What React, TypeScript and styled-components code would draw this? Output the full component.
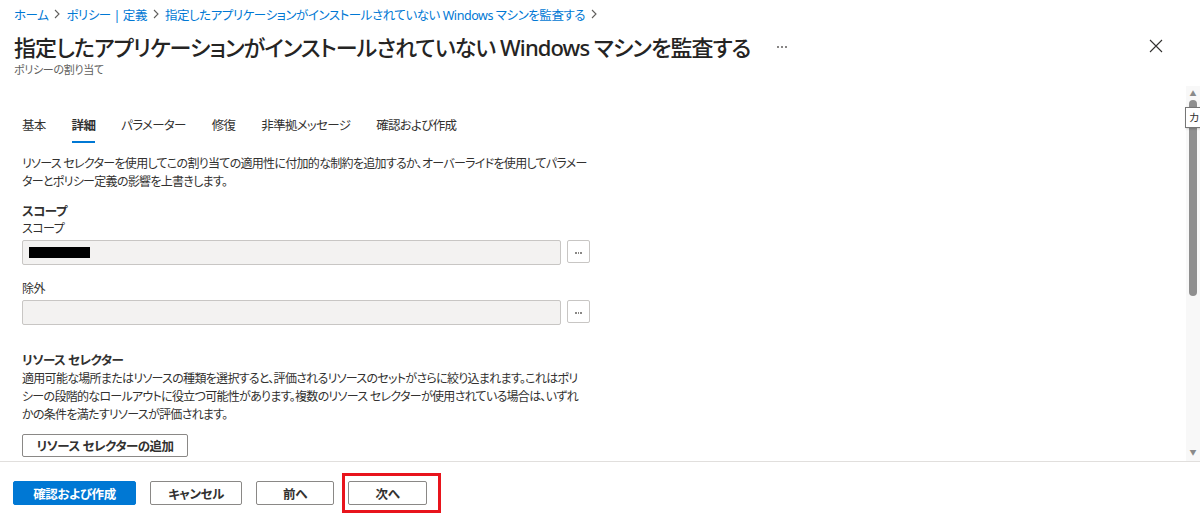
import styled, { createGlobalStyle } from "styled-components";

const GlobalStyle = createGlobalStyle`
  html, body { margin: 0; padding: 0; background: #fff; }
  body {
    font-family: "Noto Sans", "Noto Sans CJK JP", sans-serif;
    font-feature-settings: "palt";
    color: #323130;
  }
  * { box-sizing: border-box; }
`;

const crumbs = ["ホーム", "ポリシー | 定義", "指定したアプリケーションがインストールされていない Windows マシンを監査する"];
const tabs = ["基本", "詳細", "パラメーター", "修復", "非準拠メッセージ", "確認および作成"];

const Chevron = () => (
  <svg width="8" height="12" viewBox="0 0 8 12">
    <path d="M2 2 L6 6 L2 10" stroke="#605e5c" strokeWidth="1.1" fill="none" />
  </svg>
);

export default function App() {
  return (
    <Page>
      <GlobalStyle />
      <Header>
        <Breadcrumb>
          {crumbs.map((c) => (
            <Crumb key={c}>
              <CrumbLink>{c}</CrumbLink>
              <Chevron />
            </Crumb>
          ))}
        </Breadcrumb>
        <TitleRow>
          <Title>指定したアプリケーションがインストールされていない Windows マシンを監査する</Title>
          <More>
            <Dot /><Dot /><Dot />
          </More>
          <Close aria-label="close">
            <svg width="14" height="14" viewBox="0 0 14 14">
              <path d="M1 1 L13 13 M13 1 L1 13" stroke="#323130" strokeWidth="1.1" fill="none" />
            </svg>
          </Close>
        </TitleRow>
        <Subtitle>ポリシーの割り当て</Subtitle>
      </Header>

      <Body>
        <Content>
          <Tabs>
            {tabs.map((t, i) => (
              <Tab key={t} selected={i === 1}>{t}</Tab>
            ))}
          </Tabs>
          <Paragraph>
            リソース セレクターを使用してこの割り当ての適用性に付加的な制約を追加するか、オーバーライドを使用してパラメーターとポリシー定義の影響を上書きします。
          </Paragraph>
          <SectionTitle>スコープ</SectionTitle>
          <Field>
            <Label>スコープ</Label>
            <InputRow>
              <ReadOnlyInput>
                <Redacted />
              </ReadOnlyInput>
              <PickButton>
                <SmallDot /><SmallDot /><SmallDot />
              </PickButton>
            </InputRow>
          </Field>
          <Field gap={16}>
            <Label>除外</Label>
            <InputRow>
              <ReadOnlyInput />
              <PickButton>
                <SmallDot /><SmallDot /><SmallDot />
              </PickButton>
            </InputRow>
          </Field>
          <SectionTitle gap={27}>リソース セレクター</SectionTitle>
          <Paragraph tight width={564}>
            適用可能な場所またはリソースの種類を選択すると、評価されるリソースのセットがさらに絞り込まれます。これはポリシーの段階的なロールアウトに役立つ可能性があります。複数のリソース セレクターが使用されている場合は、いずれかの条件を満たすリソースが評価されます。
          </Paragraph>
          <OutlineButton width={166}>リソース セレクターの追加</OutlineButton>
        </Content>
        <Scrollbar>
          <Arrow>▲</Arrow>
          <Track>
            <Thumb />
          </Track>
          <Arrow>▼</Arrow>
          <Tooltip>カ</Tooltip>
        </Scrollbar>
      </Body>

      <Footer>
        <FooterButton primary width={123}>確認および作成</FooterButton>
        <FooterButton width={92}>キャンセル</FooterButton>
        <FooterButton width={78}>前へ</FooterButton>
        <Highlight>
          <FooterButton width={79}>次へ</FooterButton>
        </Highlight>
      </Footer>
    </Page>
  );
}

const Page = styled.div`
  width: 1200px;
  height: 524px;
  display: flex;
  flex-direction: column;
  overflow: hidden;
`;

const Header = styled.div`
  padding: 0 14px;
  height: 86px;
`;

const Breadcrumb = styled.div`
  display: flex;
  align-items: center;
  height: 28px;
  font-size: 12.5px;
  letter-spacing: -0.45px;
`;

const Crumb = styled.span`
  display: inline-flex;
  align-items: center;
  gap: 5px;
  margin-right: 5px;
`;

const CrumbLink = styled.span`
  color: #0078d4;
`;

const TitleRow = styled.div`
  display: flex;
  align-items: center;
  height: 36px;
`;

const Title = styled.h1`
  margin: 0;
  font-size: 22px;
  letter-spacing: -0.9px;
  font-weight: 500;
  color: #252423;
  white-space: nowrap;
`;

const More = styled.div`
  display: flex;
  gap: 2px;
  margin-left: 27px;
  padding-top: 2px;
`;

const Dot = styled.span`
  width: 2px;
  height: 2px;
  border-radius: 50%;
  background: #605e5c;
`;

const Close = styled.div`
  margin-left: auto;
  margin-right: 23px;
  display: flex;
  align-items: center;
`;

const Subtitle = styled.div`
  font-size: 11px;
  letter-spacing: -0.3px;
  color: #605e5c;
  line-height: 12px;
`;

const Body = styled.div`
  flex: 1;
  display: flex;
  min-height: 0;
  position: relative;
`;

const Content = styled.div`
  flex: 1;
  padding: 28px 0 0 22px;
  width: 0;
`;

const Tabs = styled.div`
  display: flex;
  gap: 26px;
  height: 29px;
`;

const Tab = styled.div<{ selected?: boolean }>`
  font-size: 12.5px;
  letter-spacing: -0.7px;
  line-height: 20px;
  height: 29px;
  padding-top: 2px;
  color: #323130;
  font-weight: ${(p) => (p.selected ? 600 : 400)};
  border-bottom: 2px solid ${(p) => (p.selected ? "#0078d4" : "transparent")};
`;

const Paragraph = styled.p<{ tight?: boolean; width?: number }>`
  width: ${(p) => p.width ?? 568}px;
  margin: ${(p) => (p.tight ? "0" : "12px 0 0")};
  font-size: 12px;
  letter-spacing: -0.7px;
  line-height: 18px;
  color: #323130;
`;

const SectionTitle = styled.div<{ gap?: number }>`
  margin-top: ${(p) => p.gap ?? 12}px;
  font-size: 12.5px;
  letter-spacing: -0.5px;
  font-weight: 700;
  line-height: 18px;
`;

const Field = styled.div<{ gap?: number }>`
  width: 568px;
  margin-top: ${(p) => p.gap ?? 0}px;
`;

const Label = styled.div`
  font-size: 12px;
  letter-spacing: -0.5px;
  line-height: 16px;
  color: #323130;
  margin-bottom: 3px;
`;

const InputRow = styled.div`
  display: flex;
  align-items: flex-start;
  gap: 6px;
`;

const ReadOnlyInput = styled.div`
  flex: 1;
  height: 25px;
  background: #f3f2f1;
  border: 1px solid #c8c6c4;
  border-radius: 2px;
  display: flex;
  align-items: center;
  padding-left: 6px;
`;

const Redacted = styled.span`
  width: 61px;
  height: 11px;
  background: #000;
`;

const PickButton = styled.div`
  width: 23px;
  height: 23px;
  border: 1px solid #c8c6c4;
  border-radius: 2px;
  display: flex;
  align-items: center;
  justify-content: center;
  gap: 1px;
  padding-top: 3px;
`;

const SmallDot = styled.span`
  width: 1.5px;
  height: 1.5px;
  background: #8a8886;
`;

const OutlineButton = styled.div<{ width: number }>`
  margin-top: 10px;
  width: ${(p) => p.width}px;
  height: 23px;
  border: 1px solid #8a8886;
  border-radius: 2px;
  font-size: 12.5px;
  letter-spacing: -0.5px;
  font-weight: 700;
  display: flex;
  align-items: center;
  justify-content: center;
`;

const Scrollbar = styled.div`
  width: 14px;
  background: #f8f8f8;
  display: flex;
  flex-direction: column;
  align-items: center;
  padding: 2px 0;
`;

const Arrow = styled.div`
  font-size: 7px;
  color: #8a8a8a;
  line-height: 12px;
  height: 12px;
`;

const Track = styled.div`
  flex: 1;
  width: 100%;
  display: flex;
  justify-content: center;
`;

const Thumb = styled.div`
  width: 8px;
  height: 196px;
  border-radius: 4px;
  background: #8f8f8f;
`;

const Tooltip = styled.div`
  position: absolute;
  right: -6px;
  top: 21px;
  width: 21px;
  height: 21px;
  background: #fff;
  border: 1px solid #767676;
  font-size: 11px;
  line-height: 19px;
  padding-left: 3px;
  color: #323130;
  box-shadow: 1px 1px 2px rgba(0, 0, 0, 0.2);
`;

const Footer = styled.div`
  height: 63px;
  border-top: 1px solid #e1dfdd;
  display: flex;
  align-items: center;
  gap: 14px;
  padding: 0 13px;
`;

const FooterButton = styled.div<{ primary?: boolean; width: number }>`
  width: ${(p) => p.width}px;
  height: 24px;
  border-radius: 2px;
  border: 1px solid ${(p) => (p.primary ? "#0078d4" : "#8a8886")};
  background: ${(p) => (p.primary ? "#0078d4" : "#fff")};
  color: ${(p) => (p.primary ? "#fff" : "#323130")};
  font-size: 12.5px;
  letter-spacing: -0.4px;
  font-weight: 700;
  display: flex;
  align-items: center;
  justify-content: center;
`;

const Highlight = styled.div`
  position: relative;
  &::after {
    content: "";
    position: absolute;
    left: -6px;
    right: -14px;
    top: -8px;
    bottom: -8px;
    border: 3px solid #e8141c;
  }
`;
